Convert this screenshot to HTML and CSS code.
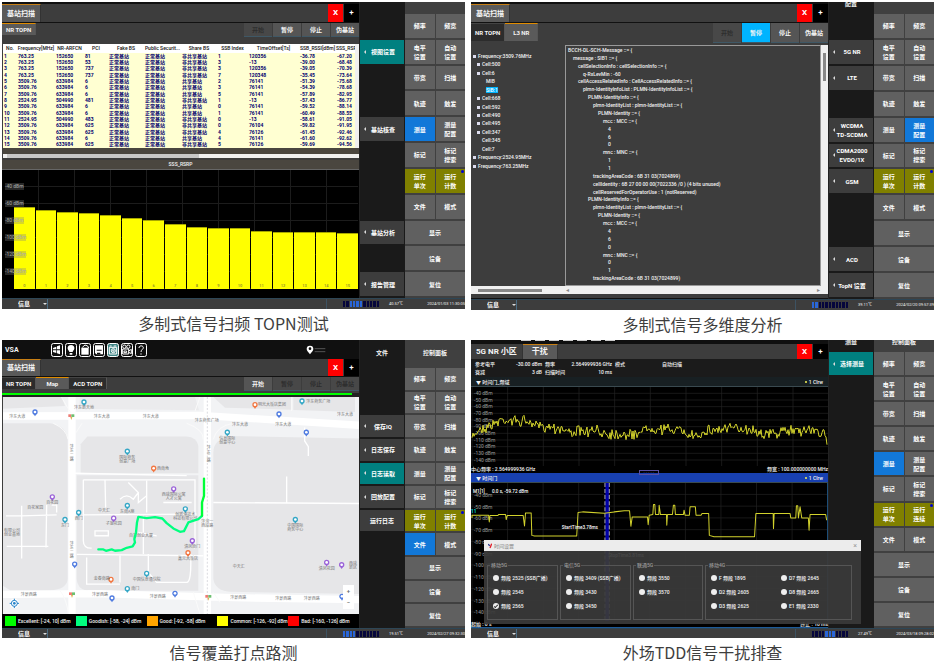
FILE: index.html
```html
<!DOCTYPE html>
<html lang="zh">
<head>
<meta charset="utf-8">
<title>多制式信号测试</title>
<link rel="stylesheet" href="styles.css">
</head>
<body>
<main class="gallery">

<figure>
  <section class="screen">
    <div class="body">
      <div class="work">
        <div class="edge"></div>
        <div class="tabbar"><button class="tab">基站扫描</button><button class="close">X</button><button class="add">+</button></div>
        <div class="tools">
          <button class="subtab lit">NR TOPN</button>
          <div class="actions"><button disabled>开始</button><button>暂停</button><button>停止</button><button>伪基站</button></div>
        </div>
        <div class="tablebox">
          <table class="cells">
            <colgroup><col class="c14"><col class="c38"><col class="c29"><col class="c24"><col class="c36"><col class="c37"><col class="c36"><col class="c31"><col class="c51"><col class="c37"><col></colgroup>
            <thead><tr><th>No.</th><th>Frequency[MHz]</th><th>NR-ARFCN</th><th>PCI</th><th>Fake BS</th><th>Public Securit...</th><th>Share BS</th><th>SSB Index</th><th>TimeOffset[Ts]</th><th>SSB_RSSI[dBm]</th><th>SSS_RSR</th></tr></thead>
            <tbody id="cells"></tbody>
          </table>
          <div class="vscroll"></div>
        </div>
        <div class="tablefoot"></div>
        <div class="hscroll"><i class="wide"></i></div>
        <div class="charttitle">SSS_RSRP</div>
        <div class="barchart">
          <div class="bars" id="bars"></div>
          <div class="ylabels"><span>-40 dBm</span><span>-60 dBm</span><span>-80 dBm</span><span>-100 dBm</span><span>-120 dBm</span><span>-140 dBm</span></div>
        </div>
      </div>
      <nav class="side"><div></div>
        <button class="r2 teal arrow">视图设置</button><button class="r5 arrow">基站核查</button><button class="r9 arrow">基站分析</button><button class="r11 arrow">报告管理</button>
      </nav>
      <div class="keypad" data-active="测量"></div>
    </div>
    <footer class="status" data-temp="40.57℃" data-time="2024/01/03 11:30:05" data-on="2,3,4,5"></footer>
  </section>
  <figcaption>多制式信号扫频 TOPN测试</figcaption>
</figure>

<figure>
  <section class="screen tall">
    <div class="body">
      <div class="work">
        <div class="edge"></div>
        <div class="tabbar"><button class="tab">基站扫描</button><button class="close">X</button><button class="add">+</button></div>
        <div class="tools high">
          <button class="subtab dark">NR TOPN</button><button class="subtab lit">L3 NR</button>
          <div class="actions"><button disabled>开始</button><button class="cyan">暂停</button><button>停止</button><button>伪基站</button></div>
        </div>
        <div class="decode">
          <div class="treepane">
            <ul class="tree">
              <li class="node root">Frequency:3509.76MHz</li><li class="node">Cell:500</li><li class="node">Cell:6</li><li class="leaf">MIB</li><li class="leaf"><mark>SIB:1</mark></li><li class="node">Cell:668</li><li class="node">Cell:592</li><li class="node">Cell:490</li><li class="node">Cell:495</li><li class="node">Cell:347</li><li>Cell:345</li><li>Cell:7</li><li class="node root">Frequency:2524.95MHz</li><li class="node root">Frequency:763.25MHz</li>
            </ul>
          </div>
          <div class="code" id="code"></div>
          <div class="vscroll thick"><i></i></div>
        </div>
        <div class="hpair"><div><i></i></div><div><span>◂</span><span>▸</span></div></div>
        <div class="gapbar"></div>
      </div>
      <nav class="side"><div class="cut">配置</div>
        <button class="r2 arrow">5G NR</button><button class="r3 arrow">LTE</button><button class="r5 arrow">WCDMA<br>TD-SCDMA</button><button class="r6 arrow">CDMA2000<br>EVDO/1X</button><button class="r7 arrow">GSM</button><button class="r10 arrow">ACD</button><button class="r11 arrow">TopN 设置</button>
      </nav>
      <div class="keypad" data-active="测量配置"></div>
    </div>
    <footer class="status" data-temp="39.11℃" data-time="2024/02/20 09:57:39" data-on="0,1"></footer>
  </section>
  <figcaption>多制式信号多维度分析</figcaption>
</figure>

<figure>
  <section class="screen short headed">
    <div class="body">
      <div class="work">
        <header class="appbar">
          <b>VSA</b>
          <div class="icons">
            <svg viewBox="0 0 36 42"><rect x="1.500" y="1.500" width="33" height="39" rx="6"/><path class="f" d="M6 15l10-4v8H6zM18 10l9-3v12h-9zM6 22h10v8l-10-3zM18 22h9v12l-9-3z"/></svg>
            <svg viewBox="0 0 36 42"><rect x="1.500" y="1.500" width="33" height="39" rx="6"/><path class="f" d="M18 6c-7 0-11 5-10 11 1 5 5 6 5 10h10c0-4 4-5 5-10 1-6-3-11-10-11zM14 30h8v5h-8z"/></svg>
            <svg viewBox="0 0 36 42"><rect x="1.500" y="1.500" width="33" height="39" rx="6"/><path class="f" d="M7 14h22v21H7z"/><path d="M10 13l8-7 8 3 3 6"/></svg>
            <svg viewBox="0 0 36 42"><rect x="1.500" y="1.500" width="33" height="39" rx="6"/><path class="f" d="M6 7h24v27H10l-4-4z"/><path class="k" d="M11 20h15v3H11zM12 29h10v5H12z"/></svg>
            <svg viewBox="0 0 36 42" class="on"><rect x="1.500" y="1.500" width="33" height="39" rx="6"/><path d="M7 13h22v20H7zM8 9h6M20 9h8"/><circle cx="19" cy="23" r="6"/><circle cx="19" cy="23" r="2"/></svg>
            <svg viewBox="0 0 36 42"><rect x="1.500" y="1.500" width="33" height="39" rx="6"/><path d="M5 18h18v15H5zM23 24l8-5v13l-8-4M9 24h8v5H9z"/><circle cx="10" cy="11" r="5"/><circle cx="22" cy="11" r="5"/></svg>
            <svg viewBox="0 0 36 42"><rect x="1.500" y="1.500" width="33" height="39" rx="6"/><path d="M12 15c0-9 13-8 13-1 0 5-7 6-7 13M18 31v4"/></svg>
          </div>
          <svg class="pin" viewBox="0 0 60 30"><path class="f" d="M12 2a10 10 0 0 0-10 10c0 6 5 8 10 16 5-8 10-10 10-16A10 10 0 0 0 12 2z"/><circle class="k" cx="12" cy="11" r="4"/><path class="dim" d="M26 11h32M26 20h32"/></svg>
        </header>
        <div class="tabbar"><button class="tab">基站扫描</button><button class="close">X</button><button class="add">+</button></div>
        <div class="tools">
          <button class="subtab dark">NR TOPN</button><button class="subtab lit">Map</button><button class="subtab dark">ACD TOPN</button>
          <div class="actions"><button class="bright">开始</button><button disabled>暂停</button><button disabled>停止</button><button disabled>伪基站</button></div>
        </div>
        <div class="progress"><i></i></div>
        <div class="mapbox">
        <svg class="map" viewBox="9 183 1068 652" preserveAspectRatio="none">
          <rect x="9" y="183" width="1068" height="652" fill="#f2f3f5"/>
          <g fill="#e6e6e8">
            <path d="M9 262H150Q200 270 203 310V730Q200 762 150 764H30L9 750z"/>
            <path d="M262 302H560Q590 304 595 330V412H242V325z"/>
            <path d="M230 418H595V765H260Q232 760 230 730z"/>
            <path d="M690 300Q640 310 640 350V730Q645 765 690 768L1077 775V308z"/>
            <path d="M9 183H185L195 210 9 218zM640 183h235v38l-200-6zM880 183h185v45l-185-6z"/>
            <path d="M240 183h345l12 40-360-5z" fill="#ebebed"/>
          </g>
          <g fill="none" stroke="#fff">
            <path stroke-width="22" d="M9 240L600 238 1077 268M9 776L300 774 700 786 1077 792M216 183V835M622 183V835"/>
            <g stroke-width="4">
              <path d="M225 412L560 419M250 432H585V640M250 432V615Q250 638 275 637M250 537L590 535M230 656L610 660M315 432L317 515M285 585H325V600H285zM360 490Q380 470 400 490L415 470 385 440M440 435V530M415 470V500L440 480M490 500H575M430 540V655M445 655V710L470 740H560Q575 740 572 655M360 660V740M260 665V745H360M415 590L470 600"/>
              <path d="M18 540L63 540 170 537M65 510V668M140 507L138 635M20 632H145M155 508H170V530M640 500L1077 503M860 422V500M914 275V315L925 332V360"/>
            </g>
            <path stroke-width="3" stroke="#fafafa" d="M184 183L212 230M246 262L228 290M600 183L585 225M160 262Q200 280 204 310M640 310Q650 270 700 262M560 262Q610 280 610 310M875 183V225M180 765Q200 790 205 835M580 770L600 835M640 770L660 800"/>
          </g>
          <path d="M622 183V835" stroke="#c8c8d0" stroke-width="2" stroke-dasharray="6 5" fill="none"/>
          <g id="pois"></g>
          <g fill="none" stroke-linecap="round" stroke-linejoin="round" stroke-width="7">
            <path stroke="#00ff7f" d="M295 641L310 641 318 645 335 641 345 645 365 643 380 636 398 632 405 620 403 610 408 590 411 560 415 543 440 547 465 544 487 548 500 562 520 578 540 588 552 586 565 560 595 550 606 540"/>
            <path stroke="#00ff38" d="M606 540L606 500 612 480 612 428"/>
          </g>
          <g><circle cx="43" cy="803" r="14" fill="#fff"/><circle cx="43" cy="803" r="9" fill="none" stroke="#2783c9" stroke-width="3"/><circle cx="43" cy="803" r="4" fill="#2783c9"/><path d="M43 789v6M43 811v6M29 803h6M51 803h6" stroke="#2783c9" stroke-width="3"/></g>
        </svg>
        <div class="zoomer"><button>+</button><button>−</button></div>
        </div>
        <ul class="legend"><li><i class="g1"></i>Excellent: [-24, 10] dBm</li><li><i class="g2"></i>Goodish: [-58, -24] dBm</li><li><i class="g3"></i>Good: [-92, -58] dBm</li><li><i class="g4"></i>Common: [-126, -92] dBm</li><li><i class="g5"></i>Bad: [-160, -126] dBm</li></ul>
      </div>
      <nav class="side"><div>文件</div>
        <button class="r3 arrow">保存IQ</button><button class="r4 arrow">日志保存</button><button class="r5 teal arrow">日志读取</button><button class="r6 arrow">回放配置</button><button class="r7">运行日志</button>
      </nav>
      <div class="keypad" data-active="文件" data-head="控制面板"></div>
    </div>
    <footer class="status" data-temp="19.51℃" data-time="2024/02/27 09:32:30" data-on="0,1,2,3"></footer>
  </section>
  <figcaption>信号覆盖打点路测</figcaption>
</figure>

<figure>
  <section class="screen short">
    <div class="body">
      <div class="work">
        <div class="edge deep"><i></i><i></i><i></i><i></i><i></i><i></i><i></i></div>
        <div class="tabbar low"><button class="tab plain">5G NR 小区</button><button class="tab">干扰</button><button class="close">X</button><button class="add">+</button></div>
        <dl class="params"><dt>参考电平</dt><dd>-30.00 dBm</dd><dt>频率</dt><dd>2.564999936 GHz</dd><dt>模式</dt><dd>自动扫描</dd><dt>衰减</dt><dd>3 dB</dd><dt>扫描时间</dt><dd>10 ms</dd></dl>
        <div class="tracebar"><span>▼ 时间门_频域</span><span><i></i>1 Clrw</span></div>
        <svg class="plot one" viewBox="9 156 1071 237" preserveAspectRatio="none">
          <g class="grid" id="grid1"></g><g class="axis" id="axis1"></g><path class="trace" id="trace1"/>
        </svg>
        <div class="plotfoot"><span>中心频率 : 2.564999936 GHz</span><span>频宽 : 100.000000000 MHz</span></div>
        <div class="tracebar blue"><span>▼ 时间门</span><span><i></i>1 Clrw</span></div>
        <svg class="plot two" viewBox="9 444 1071 411" preserveAspectRatio="none">
          <g class="grid" id="grid2"></g>
          <rect x="413" y="444" width="11" height="411" fill="#0000a8"/><path d="M412 444V855M425 444V855" stroke="#aab" stroke-width="3" stroke-dasharray="12 6"/>
          <g class="axis" id="axis2"></g>
          <path class="trace" d="M12 548V540H62L64 560 66 541H90L92 538H113L115 553 118 541H166L170 572 173 533H190L192 600 200 602H327L331 532 345 530 410 534 440 530 470 527H486L490 573 494 545H540L542 568 545 540 556 538 558 508H562L564 538H574L575 510 579 538H597L598 570 600 538H615L618 510H622L624 538H648L650 525 653 540H666L668 515H684L686 540H701L704 535H724L726 600 740 604H862L866 535H918L919 580 921 535H969L971 548H986L988 512H992L994 548 999 515 1004 548H1024L1026 585 1029 538H1076L1079 555"/>
          <text class="note" x="15" y="473">M1[1]</text><text class="note" x="72" y="473">0.0 s, -59.72 dBm</text>
          <text class="note" x="282" y="580">StartTime3.78ms</text><text class="note" x="422" y="663">StopTime3.81ms</text><text class="m1" x="9" y="533">11</text>
        </svg>
        <div class="plotfoot last"><span>起始 : 0 s</span><span>终止 : 10 ms</span></div>
        <div class="handle">- - - - -</div>
      </div>
      <nav class="side"><div class="cut">测量</div><button class="r1 teal arrow">选择测量</button></nav>
      <div class="keypad" data-active="测量" data-run="连续" data-cut="控制面板"></div>
      <form class="dialog">
        <header><svg viewBox="0 0 12 16"><path d="M1 2l4 6" stroke="#27348b"/><path d="M11 1L6 14" stroke="#e2202c"/></svg>时间设置<button type="button">×</button></header>
        <div class="groups">
          <fieldset><legend>移动5G</legend><label><input type="radio" name="b">频段 2525 (SSB广播)</label><label><input type="radio" name="b">频段 2545</label><label><input type="radio" name="b" checked>频段 2565</label></fieldset>
          <fieldset><legend>电信5G</legend><label><input type="radio" name="b">频段 3409 (SSB广播)</label><label><input type="radio" name="b">频段 3430</label><label><input type="radio" name="b">频段 3450</label></fieldset>
          <fieldset><legend>联通5G</legend><label><input type="radio" name="b">频段 3550</label><label><input type="radio" name="b">频段 3570</label></fieldset>
          <fieldset class="two-col"><legend>移动4G</legend><label><input type="radio" name="b">F 频段 1895</label><label><input type="radio" name="b">D7 频段 2645</label><label><input type="radio" name="b">D2 频段 2605</label><label><input type="radio" name="b">D8 频段 2665</label><label><input type="radio" name="b">D3 频段 2625</label><label><input type="radio" name="b">E1 频段 2330</label></fieldset>
        </div>
      </form>
    </div>
    <footer class="status" data-temp="27.49℃" data-time="2024/03/18 09:28:02" data-on="4,5,6"></footer>
  </section>
  <figcaption>外场TDD信号干扰排查</figcaption>
</figure>

</main>
<script src="script.js"></script>
</body>
</html>
```

FILE: styles.css
```css
*, *::before, *::after { box-sizing: border-box; }
body { margin: 0; background: #fff; font-family: Roboto, "Noto Sans CJK SC", sans-serif; }
button { appearance: none; border: 0; margin: 0; padding: 0; background: none; color: inherit; font: inherit; white-space: nowrap; }
ul, dl, dd { margin: 0; padding: 0; list-style: none; }

.gallery { display: grid; grid-template-columns: 1fr 1fr; gap: 5px 6px; padding: 2px 2px 0; }
figure { margin: 0; min-width: 0; }
figcaption { padding-top: 3px; text-align: center; font: 16px/22px "Noto Sans CJK SC", sans-serif; color: #3e3e3e; }

/* Instrument screen */
.screen { display: flex; flex-direction: column; min-height: 307px; background: #0c0c0c; color: #f4f4f4; font-size: 6px; line-height: 8px; font-weight: 500; --head: 10px; }
.screen.tall { min-height: 308px; }
.screen.short { min-height: 298px; }
.screen.headed { --head: 26px; }
.body { position: relative; flex: 1; display: grid; grid-template-columns: minmax(0, 1fr) 45px 60px; }
.work { position: relative; display: flex; flex-direction: column; min-width: 0; background: #3d3d3d; border-right: 1px solid #222; }
.edge { height: 2px; background: #101010; }
.edge.deep { height: 4px; display: flex; gap: 4px; padding-left: 50px; }
.edge.deep i { width: 10px; height: 1px; background: #ccc; }

.tabbar { display: flex; height: 19px; border-bottom: 1px solid #111; background: #3d3d3d; }
.tabbar.low { height: 15px; border-bottom: 0; }
.tab { padding: 0 5px; background: #5a5a5a; border-top: 1px solid #c87f14; border-right: 1px solid #333; font-size: 7px; font-weight: 700; }
.tab.plain { background: #3d3d3d; border-top-color: #3d3d3d; }
.low .tab { font-size: 8px; padding: 0 5px; }
.low .tab:nth-child(2) { padding: 0 9px; }
.close, .add { width: 15px; font-size: 8px; font-weight: 700; color: #fff; }
.close { margin-left: auto; background: #f00; }
.add { margin-left: 1px; background: #000; }

.tools { display: flex; align-items: flex-start; height: 21px; }
.tools.high { height: 22px; }
.headed .tools { height: 16px; }
.headed .tabbar { height: 18px; }
.subtab { height: 12px; min-width: 33px; padding: 0 4px; border-top: 1px solid #444; border-right: 1px solid #555; font-size: 6px; font-weight: 700; }
.subtab.lit { background: #5a5a5a; border-top-color: #e08c00; }
.subtab.dark { background: #2c2c2c; }
.high .subtab { height: 18px; }
.actions { display: flex; gap: 1px; margin-left: auto; }
.actions button { width: 28px; height: 14px; background: #555; border-bottom: 1px solid #3f5866; font-weight: 700; }
.high .actions button { height: 20px; }
.actions button:disabled { background: #484848; color: #2e2e2e; }
.actions .cyan { background: #00b4ff; }

/* Side menu and keypad share one row rhythm */
.side, .keypad { display: grid; grid-template-rows: var(--head) repeat(11, minmax(0, 1fr)); gap: 2px 1px; padding-bottom: 2px; }
.side { background: #1a1a1a; padding-right: 1px; }
.side > div, .keypad > div { display: flex; align-items: center; justify-content: center; overflow: hidden; font-weight: 700; }
.side .cut, .keypad .cut { align-items: flex-start; line-height: 4px; }
.side button { position: relative; background: #3d3d3d; color: #fff; font-weight: 700; line-height: 9px; }
.side .teal { background: #008080; }
.side .arrow { padding-left: 2px; }
.side .arrow::before { content: ""; position: absolute; left: 4px; top: calc(50% - 2px); border: 2px solid transparent; border-left: 0; border-right-color: #ddd; }
.r1 { grid-row: 2; } .r2 { grid-row: 3; } .r3 { grid-row: 4; } .r4 { grid-row: 5; } .r5 { grid-row: 6; } .r6 { grid-row: 7; }
.r7 { grid-row: 8; } .r9 { grid-row: 10; } .r10 { grid-row: 11; } .r11 { grid-row: 12; }
.keypad { grid-template-columns: 1fr 1fr; background: #404040; }
.keypad .top, .keypad .wide { grid-column: span 2; }
.keypad button { position: relative; background: #606060; color: #fff; font-weight: 700; line-height: 9px; min-height: 0; }
.keypad .olive { background: #808000; }
.keypad .active { background: #1278d8; }
.keypad .dot::after { content: ""; position: absolute; right: 1px; top: 1px; width: 3px; height: 3px; border-radius: 50%; background: #0000d0; }

.status { display: flex; align-items: center; height: 11px; background: #3d3d3d; border-top: 1px solid #2d4656; font-size: 4px; font-weight: 400; }
.short .status { height: 10px; }
.status select { appearance: none; width: 46px; height: 100%; border: 0; border-right: 1px solid #4b6d85; padding: 0 0 0 16px; background: none; color: #fff; font: 700 6px/8px "Noto Sans CJK SC", sans-serif; }
.status .drop { width: 0; height: 0; margin: 0 1px 0 -5px; border: 2px solid transparent; border-top-color: #ddd; border-bottom: 0; }
.status .message { flex: 1; align-self: stretch; border-right: 1px solid #3d5262; margin-right: 16px; }
.status .meter { display: flex; gap: 1px; height: 6px; width: 36px; }
.meter i { flex: 1; background: #06063c; }
.meter i.on { background: #2a66d8; }
.status .temp { width: 24px; text-align: right; }
.status time { width: 62px; text-align: right; white-space: nowrap; }

/* Cell table */
.tablebox { display: flex; padding-left: 1px; }
.cells { flex: 1; width: 0; height: 104px; table-layout: fixed; border-collapse: collapse; background: #ffffd2; color: #00006e; font-size: 5px; line-height: 5px; font-weight: 700; }
.cells th { height: 9px; padding: 0; background: #fff; color: #111; white-space: nowrap; font-weight: 500; }
.cells td { padding: 0 0 0 1px; white-space: nowrap; overflow: hidden; }
.c14 { width: 14px; } .c24 { width: 24px; } .c29 { width: 29px; } .c31 { width: 31px; } .c36 { width: 36px; } .c37 { width: 37px; } .c38 { width: 38px; } .c51 { width: 51px; }
.vscroll { width: 4px; background: #f0f0f0; }
.tablefoot { height: 6px; margin-left: 1px; background: #4a463f; }
.hscroll { height: 4px; margin: 0 0 2px 1px; background: #f0f0f0; }
.hscroll .wide { display: block; width: 54%; height: 4px; margin-left: 4px; background: #c8c8c8; }
.charttitle { height: 10px; text-align: center; background: #4a463f; border-bottom: 1px solid #666; font-size: 5px; }
.barchart { position: relative; flex: 1; padding: 0 1px 9px 12px; background: #000; }
.bars { display: flex; align-items: flex-end; gap: 1px; height: 100%; background: repeating-linear-gradient(90deg, transparent 0 24px, #1c1c1c 24px 25px, transparent 25px 36px), repeating-linear-gradient(#0000 0 16px, #1c1c1c 16px 17px); }
.bars span { flex: 1; display: flex; align-items: flex-end; justify-content: center; background: #ff0; border-top: 1px solid #a8a800; color: #8a8a30; font-size: 4px; line-height: 6px; }
.ylabels { position: absolute; left: 3px; top: 13px; display: flex; flex-direction: column; align-items: flex-start; gap: 10px; font-size: 5px; line-height: 7px; color: #aaa; font-weight: 400; }
.ylabels span { background: #80808050; }

/* Message decode */
.decode { flex: 1; display: grid; grid-template-columns: 94px minmax(0, 1fr) 7px; font-size: 5px; line-height: 7px; }
.tree { display: grid; grid-auto-rows: 1fr; height: 118px; margin-top: 8px; }
.tree li { padding-left: 11px; white-space: nowrap; }
.tree .node { padding-left: 6px; }
.tree .root { padding-left: 2px; }
.tree .leaf { padding-left: 15px; }
.tree .node::before { content: ""; display: inline-block; width: 3px; height: 3px; margin-right: 2px; background: #dde; }
.tree mark { background: #00b4ff; color: #fff; }
.code { display: grid; grid-auto-rows: minmax(0, 1fr); padding: 1px 0 2px 2px; border: 1px solid #999; white-space: pre; overflow: hidden; }
.vscroll.thick { width: 7px; padding: 8px 2px 0; }
.thick i { display: block; height: 28px; background: #888; }
.hpair { display: grid; grid-template-columns: 95px 1fr; height: 8px; background: #f0f0f0; }
.hpair i { display: block; width: 64px; height: 3px; margin: 3px 0 0 7px; background: #888; }
.hpair div + div { display: flex; justify-content: space-between; padding: 0 8px 0 0; color: #888; }
.gapbar { height: 5px; border-bottom: 1px solid #111; }

/* Route map */
.appbar { display: flex; align-items: center; height: 19px; background: #101010; padding-left: 3px; font-size: 7px; }
.appbar b { width: 46px; }
.icons { display: flex; gap: 2px; }
.icons svg { width: 12px; height: 14px; }
.appbar svg { fill: none; stroke: #fff; stroke-width: 3; }
.appbar .f { fill: #fff; stroke: none; }
.appbar .k { fill: #111; stroke: none; }
.appbar .on rect { fill: #3f8585; }
.pin { width: 20px; height: 10px; margin-left: auto; margin-right: 33px; }
.appbar .dim { stroke: #555; }
.progress { height: 4px; background: #222; }
.progress i { display: block; width: 98%; height: 2px; background: #0f0; }
.mapbox { position: relative; flex: 1; min-height: 0; margin-left: 1px; }
.map { position: absolute; width: 100%; height: 100%; }
.map text { font: 400 12px "Noto Sans CJK SC", sans-serif; fill: #777; text-anchor: middle; }
.zoomer { position: absolute; right: 5px; bottom: 5px; display: grid; background: #fff; color: #666; }
.zoomer button { width: 11px; height: 12px; }
.legend { display: grid; grid-template-columns: repeat(5, 1fr); height: 14px; align-items: center; background: #000; padding-left: 3px; font-size: 5px; }
.legend li { display: flex; align-items: center; gap: 2px; white-space: nowrap; }
.legend i { width: 11px; height: 10px; }
.g1 { background: #0f0; } .g2 { background: #00ff7f; } .g3 { background: #ffa500; } .g4 { background: #ff0; } .g5 { background: #f00; }

/* Interference view */
.params { display: grid; grid-template-columns: 33px 31px 30px 34px 30px 34px; align-content: space-evenly; height: 18px; padding-left: 4px; background: #1b1b1b; font-size: 5px; column-gap: 3px; }
.params dd { display: flex; justify-content: flex-end; white-space: nowrap; }
.tracebar { display: flex; justify-content: space-between; height: 10px; padding: 1px 5px; background: #182023; border-bottom: 1px solid #3a4a50; font-size: 5px; }
.tracebar.blue { background: #1840b0; }
.tracebar i { display: inline-block; width: 2px; height: 2px; margin: 0 2px 1px 0; border-radius: 50%; background: #f4f45a; }
.plot { display: block; width: 100%; background: #000; }
.plot.one { height: 79px; }
.plot.two { flex: 1; height: 0; border-right: 1px solid #1d4e78; }
.grid path { stroke: #242424; stroke-width: 2; }
.axis text { font: 400 15px Roboto, sans-serif; fill: #999; }
.trace { fill: none; stroke: #d2d22c; stroke-width: 3; stroke-linejoin: round; }
.note { font: 500 14px Roboto, sans-serif; fill: #fff; }
.m1 { font: 700 14px Roboto, sans-serif; fill: #00dada; }
.plotfoot { display: flex; justify-content: space-between; height: 7px; background: #000; font-size: 5px; line-height: 7px; }
.plotfoot.last { border-bottom: 1px solid #1d5a98; }
.handle { position: absolute; left: 47%; top: 130px; width: 20px; height: 5px; border: 1px solid #5b4fa0; color: #5b4fa0; font-size: 4px; line-height: 3px; text-align: center; }

.dialog { position: absolute; left: 13px; bottom: 4px; width: 377px; background: #3a3a3aee; font-size: 5px; }
.dialog header { display: flex; align-items: center; gap: 2px; height: 11px; padding: 0 4px; background: #ececec; color: #999; }
.dialog header svg { width: 4px; height: 6px; fill: none; stroke-width: 4; }
.dialog header button { margin-left: auto; font-size: 7px; font-weight: 400; }
.groups { display: grid; grid-template-columns: 71px 71px 70px 147px; gap: 2px; padding: 10px 3px 4px; }
.groups fieldset { display: grid; grid-template-rows: repeat(3, 14px); margin: 0; min-width: 0; height: 59px; padding: 2px 0 0 5px; border: 1px solid #555; }
.groups legend { margin-left: -3px; padding: 0 1px; line-height: 8px; color: #999; }
.groups .two-col { grid-template-columns: 1fr 1fr; }
.groups label { display: flex; align-items: center; gap: 2px; white-space: nowrap; }
.groups input { appearance: none; flex: none; display: grid; place-items: center; width: 6px; height: 6px; margin: 0; border-radius: 50%; background: #eee; }
.groups input:checked::after { content: ""; width: 4px; height: 2px; border: 1px solid #333; border-width: 0 0 1px 1px; transform: rotate(-45deg); }
```

FILE: script.js
```js
const cells = [
  ["763.25","152650",81,0,1,"120356","-36.78","-67.20"],["763.25","152650",53,0,3,"-13","-39.00","-68.48"],
  ["763.25","152650",737,0,3,"120356","-39.05","-70.39"],["763.25","152650",737,0,7,"120348","-35.45","-73.64"],
  ["3509.76","633984",6,1,2,"76141","-51.39","-75.68"],["3509.76","633984",6,1,3,"76141","-54.39","-78.68"],
  ["3509.76","633984",6,1,5,"76141","-57.89","-82.95"],["2524.95","504990",481,0,1,"-13","-57.43","-86.77"],
  ["3509.76","633984",6,1,0,"76141","-59.52","-88.14"],["3509.76","633984",6,1,1,"76141","-60.49","-88.55"],
  ["2524.95","504990",483,0,0,"-13","-58.61","-91.05"],["3509.76","633984",625,0,0,"76104","-59.82","-91.95"],
  ["3509.76","633984",625,0,4,"76126","-61.45","-92.46"],["3509.76","633984",6,1,4,"76141","-61.60","-92.62"],
  ["3509.76","633984",625,0,5,"76126","-59.69","-94.56"]
];
document.getElementById("cells").innerHTML = cells.map((c, i) =>
  "<tr>" + [i + 1, c[0], c[1], c[2], "正常基站", "正常基站", c[3] ? "共享基站" : "非共享基站", c[4], c[5], c[6], c[7]].map(v => `<td>${v}</td>`).join("") + "</tr>").join("");

const levels = [69, 66, 65, 64, 62, 60, 58, 55, 52, 51, 51, 49, 48, 48, 48, 47];
document.getElementById("bars").innerHTML = levels.map((v, i) => `<span style="height:${v}%">${i}</span>`).join("");

const code = [
  [0,"BCCH-DL-SCH-Message ::= {"],[1,"message : SIB1 ::= {"],[2,"cellSelectionInfo : cellSelectionInfo ::= {"],[3,"q-RxLevMin : -60"],
  [2,"cellAccessRelatedInfo : CellAccessRelatedInfo ::= {"],[3,"plmn-IdentityInfoList : PLMN-IdentityInfoList ::= {"],[4,"PLMN-IdentityInfo ::= {"],
  [5,"plmn-IdentityList : plmn-IdentityList ::= {"],[6,"PLMN-Identity ::= {"],[7,"mcc : MCC ::= {"],[8,"4"],[8,"6"],[8,"0"],[7,"mnc : MNC ::= {"],[8,"1"],[8,"1"],
  [5,"trackingAreaCode : 6B 31 03(7024899)"],[5,"cellIdentity : 6B 27 00 00 00(7022336 /0 ) (4 bits unused)"],[5,"cellReservedForOperatorUse : 1 (notReserved)"],
  [4,"PLMN-IdentityInfo ::= {"],[5,"plmn-IdentityList : plmn-IdentityList ::= {"],[6,"PLMN-Identity ::= {"],[7,"mcc : MCC ::= {"],[8,"4"],[8,"6"],[8,"0"],
  [7,"mnc : MNC ::= {"],[8,"0"],[8,"1"],[5,"trackingAreaCode : 6B 31 03(7024899)"]
];
document.getElementById("code").innerHTML = code.map(([d, t]) => `<div style="padding-left:${d * 5}px">${t}</div>`).join("");

document.querySelectorAll(".keypad").forEach(pad => {
  const { active, run = "计数", head = "", cut } = pad.dataset;
  const keys = ["频率","频宽","电平 设置","自动 设置","带宽","扫描","轨迹","触发","测量","测量 配置","标记","标记 搜索","运行 单次","运行 " + run,"文件","模式","显示","设备","复位"];
  pad.innerHTML = `<div class="top${cut ? " cut" : ""}">${cut || head}</div>` + keys.map((k, i) => {
    const cls = [];
    if (i > 15) cls.push("wide");
    if (k.startsWith("运行")) cls.push("olive");
    if (i === 13) cls.push("dot");
    if (k.replace(" ", "") === active) cls.push("active");
    return `<button class="${cls.join(" ")}">${k.replace(" ", "<br>")}</button>`;
  }).join("");
});

document.querySelectorAll(".status").forEach(bar => {
  const on = bar.dataset.on.split(",").map(Number);
  bar.innerHTML = `<select aria-label="信息"><option>信息</option></select><span class="drop"></span><span class="message"></span><div class="meter">` +
    Array.from({ length: 11 }, (_, i) => `<i class="${on.includes(i) ? "on" : ""}"></i>`).join("") +
    `</div><span class="temp">${bar.dataset.temp}</span><time>${bar.dataset.time}</time>`;
});

// Places on the map: x, y, marker colour, label lines
const teal = "#35a7c6", violet = "#9a62d8", orange = "#f27742", blue = "#4f7be0";
const places = [
  [252,198,teal,["沣东新天地"]],[105,228,blue,[]],[382,346,teal,["国际商务","创意广场"]],[461,397,orange,[]],[157,483,violet,["百花园"]],
  [521,459,violet,["西咸国际公寓","人才公寓"]],[556,519,teal,["创新港技术","科技有限公司"]],[382,509,teal,["东南A座"]],[341,547,violet,["子瑜花园"]],[236,530,teal,["西门"]],[195,551,teal,["东门"]],
  [577,615,violet,["清凤南门"]],[564,651,orange,["鑫元大饭店"]],[440,713,teal,["中国信息通信院"]],[333,731,orange,[]],[382,759,teal,[]],[224,685,blue,[]],[336,787,blue,[]],[525,773,blue,[]],
  [682,289,teal,["信息国际","创意中心"]],[765,206,orange,[]],[906,195,teal,[]],[837,234,blue,[]],[919,289,blue,[]],[886,551,teal,["中国国际","商务中心"]],[980,680,violet,["清凤花园"]],[1025,687,violet,[]],[1026,782,blue,[]]
];
const roads = [[305,246,"沣东大道"],[452,247,"沣东大道"],[52,245,"沣东大道"],[720,269,"沣东大道"],[850,269,"沣东大道"],[1035,241,"沣东大道"],[86,780,"沣景西路"],[300,782,"沣景西路"],[473,786,"沣景西路"],[715,790,"沣景西路"],[850,792,"沣景西路"],[935,792,"沣景西路"],[106,521,"百花家园"],[312,530,"中天汇"],[423,604,"自贸创业大厦"],[305,734,"金春南路"],[406,763,"南门"],[489,401,"西南角"],[816,210,"明光大饭店集团"],[955,200,"沣东商务广场"],[716,696,"中天汇"],[1059,687,"西咸"],[1059,700,"新区"],[36,590,"有限公司"],[36,602,"创业基地"],[622,563,"沣河一"],[622,575,"西段路"],[620,257,"沣东商务广场"]];
document.getElementById("pois").innerHTML =
  places.map(([x, y, c, l]) => `<circle cx="${x}" cy="${y}" r="8" fill="${c}"/><path d="M${x - 5} ${y + 5}h10l-5 8z" fill="${c}"/><circle cx="${x}" cy="${y}" r="4" fill="#fff"/>` +
    l.map((t, i) => `<text x="${x}" y="${y + 22 + i * 13}">${t}</text>`).join("")).join("") +
  roads.map(([x, y, t]) => `<text x="${x}" y="${y}">${t}</text>`).join("") +
  [[215,336],[215,628],[626,340]].map(([x, y]) => [..."沣东二路"].map((t, i) => `<text x="${x}" y="${y + i * 13}">${t}</text>`).join("")).join("") +
  [[214,240],[216,775],[625,783]].map(([x, y]) => `<rect x="${x - 9}" y="${y - 5}" width="9" height="8" fill="#ef7b74"/><rect x="${x}" y="${y - 5}" width="9" height="8" fill="#6cc070"/><path d="M${x - 3} ${y + 3}h6l-3 9z" fill="#e0b050"/>`).join("");

// Plot grids, axis labels and the spectrum trace
function grid(id, ys, top, bottom) {
  let d = ys.map(y => `M9 ${y}H1080`).join("");
  for (let x = 12; x < 1080; x += 107) d += `M${x} ${top}V${bottom}`;
  document.getElementById(id).innerHTML = `<path d="${d}"/>`;
}
const ys1 = Array.from({ length: 11 }, (_, i) => 175 + i * 20);
const ys2 = Array.from({ length: 11 }, (_, i) => 478 + i * 35);
grid("grid1", ys1, 156, 393);
grid("grid2", ys2, 444, 855);
document.getElementById("axis1").innerHTML = ys1.map((y, i) => `<text x="18" y="${y + 5}">-${40 + i * 10} dBm</text>`).join("");
document.getElementById("axis2").innerHTML = ys2.map((y, i) => `<text x="18" y="${y + 7}">-${40 + i * 10} dBm</text>`).join("");
const mid = [[12,310],[20,295],[40,280],[60,275],[85,265],[100,255],[130,257],[160,258],[180,262],[210,270],[250,275],[280,282],[300,290],[400,290],[430,295],[470,300],[510,300],[515,283],[560,282],[600,285],[635,278],[640,300],[670,302],[700,293],[726,285],[776,282],[806,280],[856,285],[886,298],[926,293],[976,285],[1026,285],[1066,295],[1079,335]];
let seed = 7, path = "";
const random = () => (seed = seed * 16807 % 2147483647) / 2147483647;
for (let x = 12; x <= 1079; x += 3) {
  const i = Math.max(1, mid.findIndex(p => p[0] >= x)), [ax, ay] = mid[i - 1], [bx, by] = mid[i];
  const y = ay + (by - ay) * (x - ax) / (bx - ax) + (random() + random() - 1) * 20;
  path += (path ? "L" : "M") + x + " " + Math.round(y);
}
document.getElementById("trace1").setAttribute("d", path);
```
